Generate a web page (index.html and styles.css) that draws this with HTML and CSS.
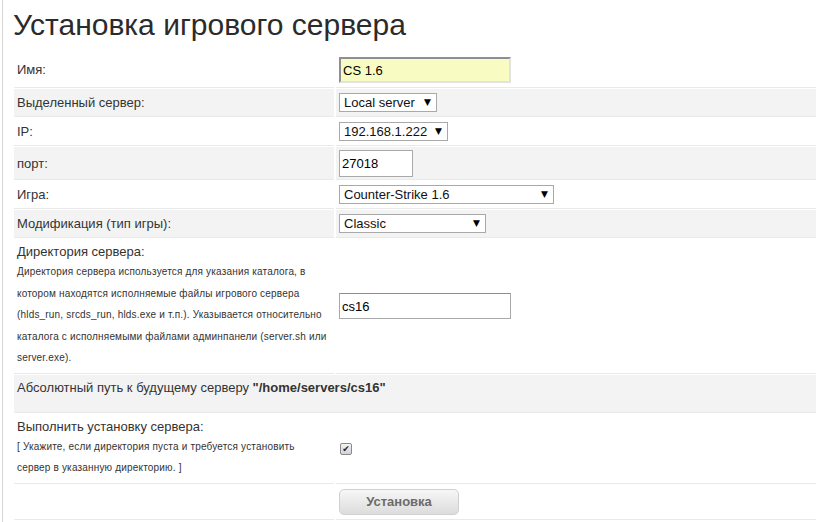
FILE: index.html
```html
<!DOCTYPE html>
<html lang="ru">
  <head>
    <meta charset="UTF-8" />
    <meta name="viewport" content="width=device-width, initial-scale=1.0" />
    <title>Установка игрового сервера</title>
    <link rel="stylesheet" href="styles.css">
  </head>
  <body>
    <div class="page">
      <h1>Установка игрового сервера</h1>

      <table class="form">
        <tr>
          <td class="label">Имя:</td>
          <td class="value"><input type="text" class="name" value="CS 1.6" /></td>
        </tr>
        <tr class="alt">
          <td class="label">Выделенный сервер:</td>
          <td class="value">
            <span class="sel"><select class="s-ds"><option>Local server</option></select></span>
          </td>
        </tr>
        <tr>
          <td class="label">IP:</td>
          <td class="value">
            <span class="sel"><select class="s-ip"><option>192.168.1.222</option></select></span>
          </td>
        </tr>
        <tr class="alt tight">
          <td class="label">порт:</td>
          <td class="value"><input type="text" class="port" value="27018" /></td>
        </tr>
        <tr>
          <td class="label">Игра:</td>
          <td class="value">
            <span class="sel"><select class="s-game"><option>Counter-Strike 1.6</option></select></span>
          </td>
        </tr>
        <tr class="alt">
          <td class="label">Модификация (тип игры):</td>
          <td class="value">
            <span class="sel"><select class="s-mod"><option>Classic</option></select></span>
          </td>
        </tr>
        <tr>
          <td class="label">
            Директория сервера:
            <p class="hint">
              Директория сервера используется для указания каталога, в<br />
              котором находятся исполняемые файлы игрового сервера<br />
              (hlds_run, srcds_run, hlds.exe и т.п.). Указывается относительно<br />
              каталога с исполняемыми файлами админпанели (server.sh или<br />
              server.exe).
            </p>
          </td>
          <td class="value"><input type="text" class="dir" value="cs16" /></td>
        </tr>
        <tr class="alt">
          <td class="label path" colspan="2">
            Абсолютный путь к будущему серверу <b>"/home/servers/cs16"</b>
          </td>
        </tr>
        <tr>
          <td class="label">
            Выполнить установку сервера:
            <p class="hint">
              [ Укажите, если директория пуста и требуется установить<br />
              сервер в указанную директорию. ]
            </p>
          </td>
          <td class="value"><span class="check">✔</span></td>
        </tr>
        <tr>
          <td class="label"></td>
          <td class="value"><button class="btn">Установка</button></td>
        </tr>
      </table>
    </div>
  </body>
</html>
```

FILE: styles.css
```css
* {
  box-sizing: border-box;
}

body {
  margin: 0;
  font-family: "Liberation Sans", Arial, sans-serif;
  font-size: 13px;
  color: #333;
  background: #fff;
}

.page {
  margin-left: 2px;
  min-height: 100vh;
  border-left: 1px solid #d4d4d4;
  padding-left: 9px;
}

h1 {
  margin: 0;
  padding: 8px 0 0 1px;
  font-size: 30px;
  font-weight: normal;
  line-height: 34px;
  color: #2b2b2b;
}

.form {
  margin-top: 10px;
  width: 806px;
  border-collapse: separate;
  border-spacing: 2px 1px;
}

.form td {
  padding: 4px 3px;
  border-bottom: 1px solid #e9e9e9;
  vertical-align: middle;
  line-height: 18px;
}

.form .label {
  width: 320px;
}

.form .tight td {
  padding-top: 3px;
  padding-bottom: 2px;
}

.alt td {
  background: #f3f3f3;
}

.form .path {
  padding-bottom: 15px;
}

.path b {
  color: #333;
}

.hint {
  margin: 0;
  font-size: 10px;
  line-height: 21.5px;
  letter-spacing: 0.18px;
  white-space: nowrap;
}

input[type="text"] {
  font-family: "Liberation Sans", Arial, sans-serif;
  font-size: 13px;
  color: #000;
  padding: 0 2px;
  margin: 0;
  outline: none;
}

.name {
  width: 172px;
  height: 26px;
  background: #f9fcc2;
  border: 2px solid #e2e2e2;
  border-top-color: #8f8f8f;
  border-left-color: #8f8f8f;
  padding-left: 1px;
}

.port {
  width: 74px;
  height: 27px;
  border: 1px solid #a9a9a9;
  background: #fff;
}

.dir {
  width: 172px;
  height: 26px;
  border: 1px solid #a9a9a9;
  border-top-color: #8f8f8f;
  background: #fff;
}

.sel {
  position: relative;
  display: inline-block;
  vertical-align: middle;
}

.sel select {
  appearance: none;
  -webkit-appearance: none;
  display: block;
  height: 19px;
  margin: 0;
  padding: 0 18px 0 4px;
  border: 1px solid #a9a9a9;
  border-radius: 0;
  background: #fff;
  font-family: "Liberation Sans", Arial, sans-serif;
  font-size: 13px;
  color: #111;
}

.sel::after {
  content: "▼";
  position: absolute;
  right: 6px;
  top: 3px;
  font-family: "DejaVu Sans", sans-serif;
  font-size: 9px;
  line-height: 12px;
  color: #000;
  pointer-events: none;
}

.s-ds {
  width: 98px;
}
.s-ip {
  width: 109px;
}
.s-game {
  width: 215px;
}
.s-mod {
  width: 147px;
}

.check {
  display: inline-block;
  width: 12px;
  height: 12px;
  margin-left: 1px;
  border: 1px solid #8a8a8a;
  border-radius: 2px;
  background: linear-gradient(#f4f4f4, #d2d2d2);
  font-family: "DejaVu Sans", sans-serif;
  font-size: 9px;
  line-height: 10px;
  text-align: center;
  color: #222;
  vertical-align: middle;
}

.btn {
  width: 120px;
  height: 26px;
  border: 1px solid #d0d0d0;
  border-radius: 5px;
  background: linear-gradient(#f7f7f7, #dcdcdc);
  font-family: "Liberation Sans", Arial, sans-serif;
  font-size: 13px;
  font-weight: bold;
  color: #6b6b6b;
  vertical-align: middle;
}
```
